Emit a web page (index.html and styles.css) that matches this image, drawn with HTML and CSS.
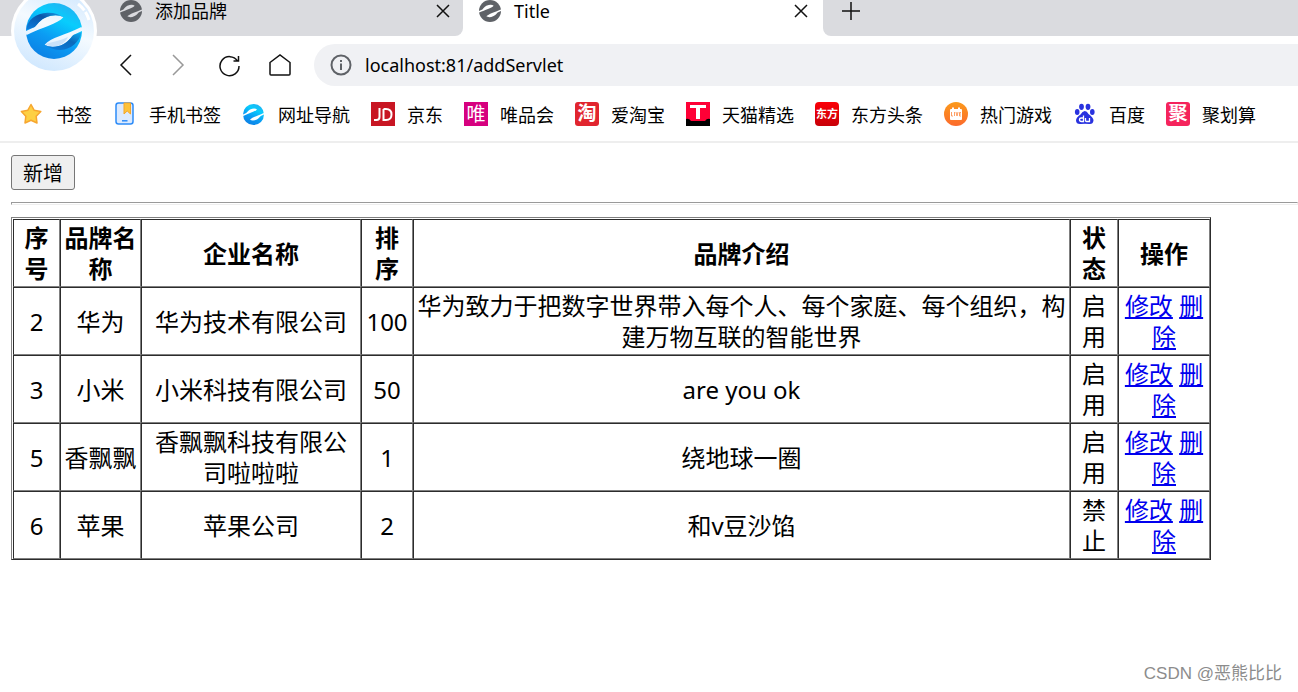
FILE: index.html
```html
<!DOCTYPE html>
<html lang="zh-CN">
<head>
<meta charset="utf-8">
<title>Title</title>
<link rel="stylesheet" href="styles.css">
</head>
<body>
<svg class="defs" aria-hidden="true">
  <defs>
    <linearGradient id="blue" x1="0.8" y1="0" x2="0.3" y2="1"><stop offset="0" stop-color="#27aef0"/><stop offset="0.3" stop-color="#08cdfd"/><stop offset="0.65" stop-color="#0b9bf3"/><stop offset="1" stop-color="#0c80e4"/></linearGradient>
    <linearGradient id="deep" x1="0" y1="1" x2="1" y2="0"><stop offset="0" stop-color="#0d7fe0"/><stop offset="0.6" stop-color="#0a55a8"/><stop offset="1" stop-color="#16a8f0"/></linearGradient>
    <linearGradient id="halo" x1="0.7" y1="0" x2="0.3" y2="1"><stop offset="0" stop-color="#d3e9fe"/><stop offset="0.45" stop-color="#f4faff"/><stop offset="1" stop-color="#cfe7fe"/></linearGradient>
    <linearGradient id="red" x1="0" y1="0" x2="0" y2="1"><stop offset="0" stop-color="#fb0007"/><stop offset="1" stop-color="#c80008"/></linearGradient>
    <linearGradient id="orange" x1="0" y1="0" x2="0" y2="1"><stop offset="0" stop-color="#fb9a1c"/><stop offset="1" stop-color="#fc6a2c"/></linearGradient>
    <mask id="cut">
      <rect width="168" height="168" fill="#fff"/>
      <path fill="#000" d="M-4 86L26 72C36 62 46 44 74 38Q100 34 112 43C94 64 50 72 2 96Z"/>
      <path fill="#000" d="M172 82L142 96C132 106 122 124 94 130Q68 134 56 125C74 104 118 96 166 72Z"/>
    </mask>
    <symbol id="e" viewBox="0 0 168 168"><circle cx="84" cy="84" r="84" mask="url(#cut)"/></symbol>
  </defs>
</svg>

<header class="browser">
  <svg class="logo" viewBox="0 0 88 88" aria-label="浏览器">
    <circle cx="44" cy="44" r="43" fill="#fff"/>
    <circle cx="44" cy="44" r="40" fill="url(#halo)"/>
    <path d="M68 17Q76 23 79 33" fill="none" stroke="#fff" stroke-width="3" stroke-dasharray="9 2 9"/>
    <use href="#e" x="16" y="16" width="56" height="56" fill="url(#blue)"/>
    <svg x="16" y="16" width="56" height="56" viewBox="0 0 168 168">
      <path d="M1 80C4 50 30 30 64 29Q95 28 112 43Q100 34 74 38C46 44 36 62 26 72Z" fill="url(#deep)"/>
      <path d="M167 88C160 116 136 140 104 141Q74 140 56 125Q68 134 94 130C122 124 132 106 142 96Z" fill="url(#deep)" opacity=".75"/>
      <path d="M58 124C80 116 106 112 126 102C118 118 106 126 90 130Q68 132 58 124Z" fill="#c9e2fa"/>
    </svg>
  </svg>

  <nav class="tabs" aria-label="标签页">
    <div class="tab tab-first">
      <svg class="tab-icon" aria-hidden="true"><use href="#e"/></svg>
      <span class="tab-title">添加品牌</span>
      <button class="plain close" aria-label="关闭"><svg viewBox="0 0 14 14"><path d="M1 1L13 13M13 1L1 13"/></svg></button>
    </div>
    <div class="tab tab-active">
      <svg class="tab-icon" aria-hidden="true"><use href="#e"/></svg>
      <span class="tab-title">Title</span>
      <button class="plain close" aria-label="关闭"><svg viewBox="0 0 14 14"><path d="M1 1L13 13M13 1L1 13"/></svg></button>
    </div>
    <div class="tab-rest">
      <button class="plain new-tab" aria-label="新标签页"><svg viewBox="0 0 18 18"><path d="M9 0V18M0 9H18"/></svg></button>
    </div>
  </nav>

  <div class="toolbar">
    <button class="plain nav" aria-label="后退"><svg viewBox="0 0 24 24"><path d="M17 2L7 12L17 22"/></svg></button>
    <button class="plain nav nav-off" aria-label="前进"><svg viewBox="0 0 24 24"><path d="M8 2L18 12L8 22"/></svg></button>
    <button class="plain nav" aria-label="刷新"><svg viewBox="0 0 24 24"><path d="M21.500 8A9.500 9.500 0 1 0 23 13M22.500 3V8H17.500"/></svg></button>
    <button class="plain nav" aria-label="主页"><svg viewBox="0 0 24 24"><path d="M3 9.500L13 2L23 9.500V21Q23 22 22 22H4Q3 22 3 21Z"/></svg></button>
    <label class="address">
      <svg class="info" viewBox="0 0 22 22" aria-label="网站信息"><circle cx="11" cy="11" r="9.500"/><path d="M11 9.500V16M11 6V8"/></svg>
      <input type="text" value="localhost:81/addServlet" aria-label="地址">
    </label>
  </div>

  <nav class="bookmarks" aria-label="书签栏">
    <a href="#"><svg viewBox="0 0 24 24"><path d="M11 2.500L14.100 8.200L20.800 9.400L16.200 14.300L17 21L11 18.200L5 21L5.800 14.300L1.400 9.400L7.900 8.200Z" fill="#fdd044" stroke="#f7a62f" stroke-width="1.500" stroke-linejoin="round"/></svg>书签</a>
    <a href="#"><svg viewBox="0 0 24 24"><rect x="3" y="1" width="17" height="21" rx="2.500" fill="#dceafe" stroke="#2d8cf8" stroke-width="1.500"/><path d="M11 1H17.500V12L14.200 9L11 12Z" fill="#fdc23a" stroke="#f3a52b"/><path d="M9 18.800H14.500" stroke="#2d8cf8" stroke-width="1.500"/></svg>手机书签</a>
    <a href="#"><svg viewBox="0 0 24 24"><use href="#e" x="1" y="2" width="21" height="21" fill="url(#blue)"/></svg>网址导航</a>
    <a href="#"><svg viewBox="0 0 24 24"><path fill="#c81623" d="M0 0H24V24H0Z"/><path d="M8.500 6V15Q8.500 18 5.500 18H3M12.500 7V18H15Q20.500 18 20.500 12.500Q20.500 7 15 7H12.500" fill="none" stroke="#fff" stroke-width="2"/></svg>京东</a>
    <a href="#"><svg viewBox="0 0 24 24"><path fill="#d6007f" d="M0 0H24V24H0Z"/><text x="12" y="19" font-size="19">唯</text></svg>唯品会</a>
    <a href="#"><svg viewBox="0 0 24 24"><rect width="24" height="24" rx="3" fill="#e1252f"/><text x="12" y="18" font-size="19" font-weight="700">淘</text></svg>爱淘宝</a>
    <a href="#"><svg viewBox="0 0 24 24"><path fill="#ff0036" d="M0 0H24V24H0Z"/><path d="M0 17Q3 16 5 19H19Q21 16 24 17V24H0Z"/><path fill="#fff" d="M4 3H20V6H14V17H10V6H4Z"/></svg>天猫精选</a>
    <a href="#"><svg viewBox="0 0 24 24"><rect width="24" height="24" rx="4" fill="url(#red)"/><text x="12" y="16" font-size="11" font-weight="700">东方</text></svg>东方头条</a>
    <a href="#"><svg viewBox="0 0 24 24"><circle cx="12" cy="12" r="12" fill="url(#orange)"/><rect x="6" y="7" width="12" height="11" rx="1" fill="#fff"/><path d="M9 5.500V9M15 5.500V9" stroke="#fff" stroke-width="2"/><path d="M7.500 10V14H9M10.500 10V14M12 10L13 14L14 10M17 10.500H15.500V14H17M15.500 12H17" fill="none" stroke="#fc8840" stroke-width=".8"/></svg>热门游戏</a>
    <a href="#"><svg viewBox="0 0 24 24"><g fill="#2932df"><ellipse cx="8.500" cy="4.800" rx="2.400" ry="3.100"/><ellipse cx="15" cy="4.800" rx="2.400" ry="3.100"/><ellipse cx="4.200" cy="10" rx="2.300" ry="3"/><ellipse cx="19.300" cy="10" rx="2.300" ry="3"/><path d="M11.700 9Q14 9 15.500 12Q20.500 15.500 20.500 18.500Q20 22.500 16 22Q12 21.300 8 22Q3.200 22.500 3 18.500Q3 15.500 7.500 12.500Q9.500 9 11.700 9Z"/></g><path d="M10.500 13.500V19.500H8.500Q6.500 19.500 6.500 17.800Q6.500 16 8.500 16H10.500M12.500 16V18.500Q12.500 19.500 13.500 19.500H16.500V16" fill="none" stroke="#fff" stroke-width="1.300"/></svg>百度</a>
    <a href="#"><svg viewBox="0 0 24 24"><rect width="24" height="24" rx="3" fill="#f5245c"/><text x="12" y="18" font-size="19" font-weight="700">聚</text></svg>聚划算</a>
  </nav>
</header>

<main class="page">
  <button class="add">新增</button>
  <hr>
  <table>
    <colgroup><col class="c-no"><col class="c-brand"><col class="c-company"><col class="c-order"><col><col class="c-status"><col class="c-action"></colgroup>
    <tr><th>序号</th><th>品牌名称</th><th>企业名称</th><th>排序</th><th>品牌介绍</th><th>状态</th><th>操作</th></tr>
    <tr><td>2</td><td>华为</td><td>华为技术有限公司</td><td>100</td><td>华为致力于把数字世界带入每个人、每个家庭、每个组织，构建万物互联的智能世界</td><td>启用</td><td><a href="#">修改</a> <a href="#">删除</a></td></tr>
    <tr><td>3</td><td>小米</td><td>小米科技有限公司</td><td>50</td><td>are you ok</td><td>启用</td><td><a href="#">修改</a> <a href="#">删除</a></td></tr>
    <tr><td>5</td><td>香飘飘</td><td>香飘飘科技有限公司啦啦啦</td><td>1</td><td>绕地球一圈</td><td>启用</td><td><a href="#">修改</a> <a href="#">删除</a></td></tr>
    <tr><td>6</td><td>苹果</td><td>苹果公司</td><td>2</td><td>和v豆沙馅</td><td>禁止</td><td><a href="#">修改</a> <a href="#">删除</a></td></tr>
  </table>
</main>
<div class="watermark">CSDN @恶熊比比</div>
</body>
</html>
```

FILE: styles.css
```css
* { box-sizing: border-box; }

body {
  margin: 0;
  min-height: 100vh;
  position: relative;
  overflow-x: hidden;
  background: #fff;
  color: #000;
  font-family: "Noto Sans", "Noto Sans CJK SC", sans-serif;
  font-size: 18px;
}

.defs { position: absolute; width: 0; height: 0; }

.plain {
  display: flex;
  align-items: center;
  justify-content: center;
  padding: 0;
  border: 0;
  background: none;
}

.plain svg { fill: none; stroke: #111; stroke-width: 1.5; }

/* Browser frame */
.browser { position: relative; border-bottom: 2px solid #eee; }

.logo {
  position: absolute;
  left: 10px;
  top: -13px;
  width: 88px;
  height: 88px;
}

.tabs { display: flex; height: 36px; line-height: 24px; }

.tab, .tab-rest {
  display: flex;
  align-items: center;
  padding-bottom: 14px;
}

.tab { gap: 13px; }

.tab-first {
  width: 463px;
  padding-left: 120px;
  padding-right: 12px;
  background: #dadbdf;
  border-bottom-right-radius: 8px;
}

.tab-active { width: 360px; padding-left: 16px; padding-right: 14px; }

.tab-rest {
  flex: 1;
  padding-left: 19px;
  background: #dadbdf;
  border-bottom-left-radius: 8px;
}

.tab-icon { width: 22px; height: 22px; fill: #5f6267; }
.tab-title { flex: 1; }
.close svg { width: 14px; height: 14px; }
.close { width: 16px; }
.new-tab svg { width: 18px; height: 18px; }

.toolbar {
  display: flex;
  align-items: center;
  gap: 19px;
  padding-top: 8px;
  padding-left: 110px;
}

.nav { width: 32px; height: 32px; }
.nav svg { width: 24px; height: 24px; }
.nav-off svg { stroke: #999; }

.address {
  flex: 1;
  display: flex;
  align-items: center;
  gap: 13px;
  height: 42px;
  padding-left: 16px;
  background: #f0f1f4;
  border-radius: 21px 0 0 21px;
}

.info { width: 22px; height: 22px; fill: none; stroke: #5f6267; stroke-width: 2; }

.address input {
  flex: 1;
  padding: 0;
  border: 0;
  outline: 0;
  background: none;
  font: inherit;
  color: inherit;
}

.bookmarks {
  display: flex;
  align-items: center;
  gap: 21px;
  height: 55px;
  padding-left: 20px;
  overflow: hidden;
}

.bookmarks a {
  display: flex;
  align-items: center;
  gap: 12px;
  color: inherit;
  text-decoration: none;
  white-space: nowrap;
}

.bookmarks svg { width: 24px; height: 24px; overflow: visible; }
.bookmarks text { fill: #fff; text-anchor: middle; }

/* Page content */
.page { padding: 12px 0 0 11px; }

.add {
  display: block;
  height: 35px;
  padding: 0 11px;
  border: 1px solid #767676;
  border-radius: 3px;
  background: #efefef;
  color: #000;
  font-family: inherit;
  font-size: 20px;
}

hr {
  margin: 12px 0;
  height: 3px;
  border: 1px solid;
  border-color: #9a9a9a #eee #eee #9a9a9a;
}

table {
  width: 100%;
  max-width: 1200px;
  table-layout: fixed;
  border: 1px solid;
  border-color: #808080 #2c2c2c #2c2c2c #808080;
  border-spacing: 0;
  padding: 1px 0 0 1px;
  font-size: 24px;
  line-height: 31px;
  text-align: center;
}

th, td {
  padding: 2px;
  border: 1px solid;
  border-color: #2c2c2c #808080 #808080 #2c2c2c;
}

td a { color: #00e; text-decoration: underline; }

.c-no { width: 47px; }
.c-brand { width: 81px; }
.c-company { width: 220px; }
.c-order { width: 52px; }
.c-status { width: 48px; }
.c-action { width: 92px; }

.watermark {
  position: absolute;
  right: 16px;
  bottom: 6px;
  color: #8c8c8c;
  font-family: "Liberation Sans", "Noto Sans CJK SC", sans-serif;
  font-size: 17px;
  line-height: 24px;
}
```
